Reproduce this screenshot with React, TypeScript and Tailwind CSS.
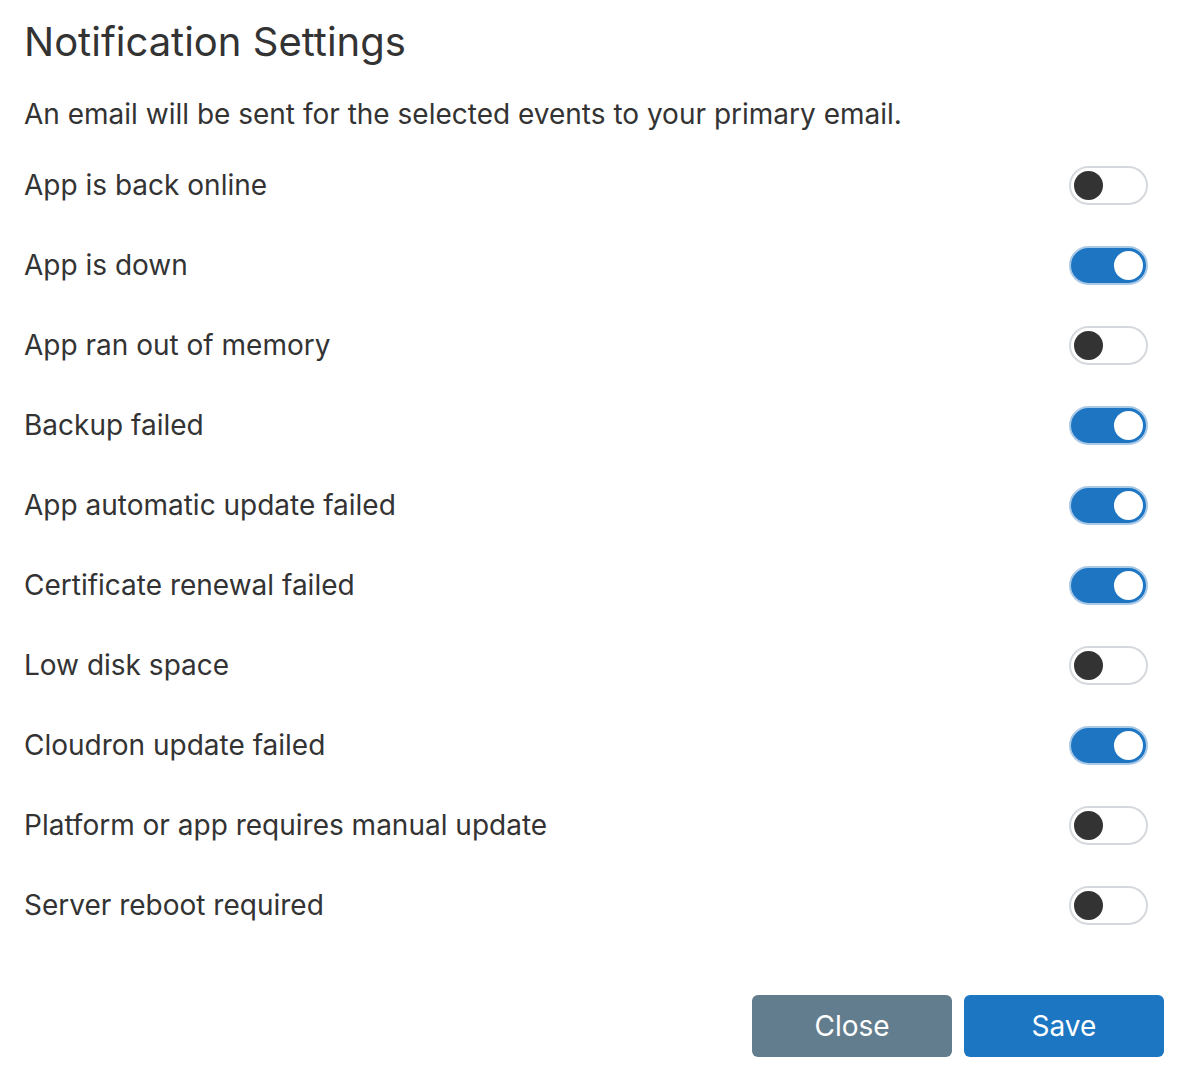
import { useState } from "react";

const EVENTS = [
  { label: "App is back online", on: false },
  { label: "App is down", on: true },
  { label: "App ran out of memory", on: false },
  { label: "Backup failed", on: true },
  { label: "App automatic update failed", on: true },
  { label: "Certificate renewal failed", on: true },
  { label: "Low disk space", on: false },
  { label: "Cloudron update failed", on: true },
  { label: "Platform or app requires manual update", on: false },
  { label: "Server reboot required", on: false },
];

function Toggle({ on, onChange }: { on: boolean; onChange: () => void }) {
  return (
    <button
      type="button"
      onClick={onChange}
      className={
        on
          ? "flex items-center justify-end w-[79px] h-[39px] rounded-full border-2 border-[#a9c9e6] bg-[#1e76c2] px-[3px]"
          : "flex items-center justify-start w-[79px] h-[39px] rounded-full border-2 border-[#d5d9dd] bg-white px-[3px]"
      }
    >
      <span
        className={
          on
            ? "block w-[29px] h-[29px] rounded-full bg-white"
            : "block w-[29px] h-[29px] rounded-full bg-[#333333]"
        }
      />
    </button>
  );
}

export default function App() {
  const [events, setEvents] = useState(EVENTS);

  const flip = (i: number) =>
    setEvents((prev) => prev.map((e, j) => (j === i ? { ...e, on: !e.on } : e)));

  return (
    <div className="min-h-screen bg-white text-[#333333] font-['Inter',sans-serif] pl-[24px] pr-[25px] pt-[16px]">
      <h1 className="text-[40px] leading-[52px] font-normal">Notification Settings</h1>
      <p className="mt-[28px] text-[28px] leading-[36px]">
        An email will be sent for the selected events to your primary email.
      </p>

      <div className="mt-[13px] pr-[16px]">
        {events.map((e, i) => (
          <div key={e.label} className="flex items-center justify-between h-[80px]">
            <span className="text-[28px] leading-[36px]">{e.label}</span>
            <Toggle on={e.on} onChange={() => flip(i)} />
          </div>
        ))}
      </div>

      <div className="flex justify-end gap-[12px] mt-[50px]">
        <button className="w-[200px] h-[62px] rounded-[6px] bg-[#627d8d] text-white text-[28px]">
          Close
        </button>
        <button className="w-[200px] h-[62px] rounded-[6px] bg-[#1d76c2] text-white text-[28px]">
          Save
        </button>
      </div>
    </div>
  );
}
